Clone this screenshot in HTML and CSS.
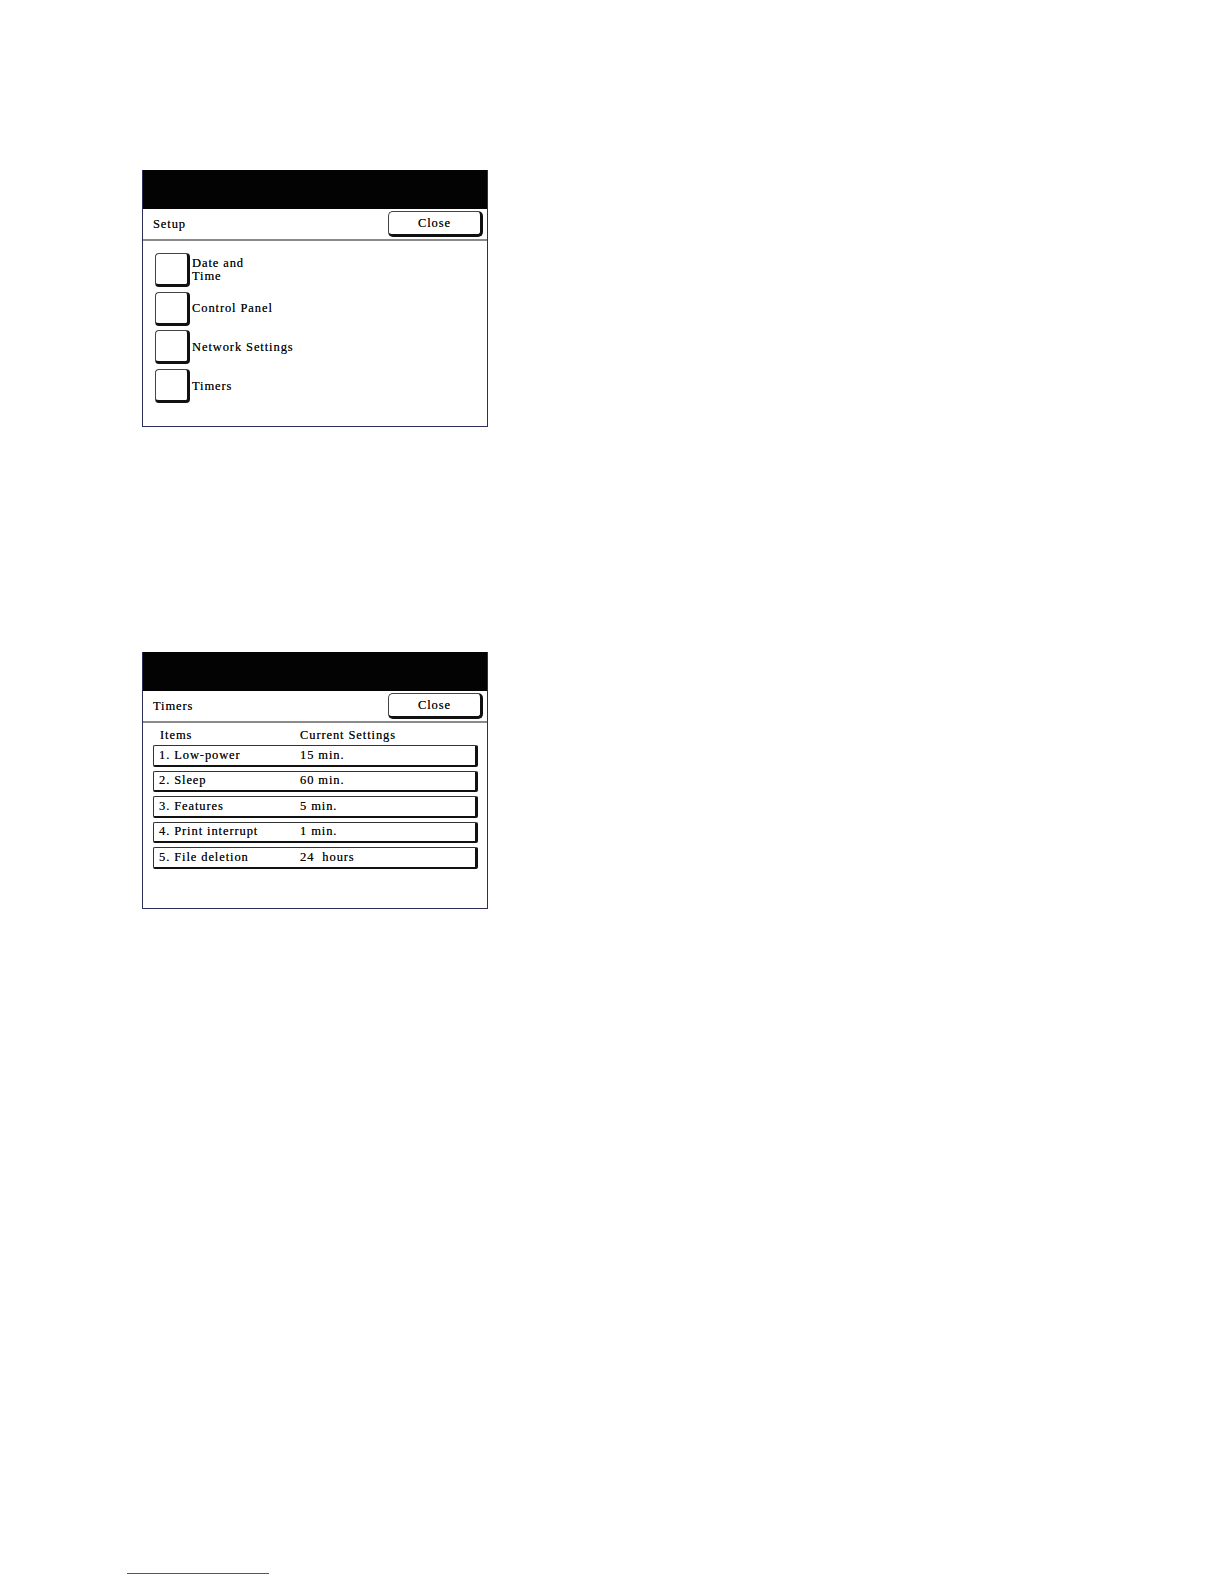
FILE: index.html
```html
<!DOCTYPE html>
<html lang="en">
<head>
<meta charset="utf-8">
<title>Setup and Timers</title>
<link rel="stylesheet" href="styles.css">
</head>
<body>
<div class="page">
  <section class="panel panel-setup">
    <div class="panel-header"></div>
    <div class="title-row">
      <span class="title">Setup</span>
      <span class="close-btn">Close</span>
    </div>
    <div class="menu">
      <div class="menu-item"><span class="square"></span><span class="label">Date and<br>Time</span></div>
      <div class="menu-item"><span class="square"></span><span class="label">Control Panel</span></div>
      <div class="menu-item"><span class="square"></span><span class="label">Network Settings</span></div>
      <div class="menu-item"><span class="square"></span><span class="label">Timers</span></div>
    </div>
  </section>

  <section class="panel panel-timers">
    <div class="panel-header"></div>
    <div class="title-row">
      <span class="title">Timers</span>
      <span class="close-btn">Close</span>
    </div>
    <div class="timer-list">
      <div class="timer-head"><span class="col-item">Items</span><span class="col-value">Current Settings</span></div>
      <div class="timer-row"><span class="col-item">1. Low-power</span><span class="col-value">15 min.</span></div>
      <div class="timer-row"><span class="col-item">2. Sleep</span><span class="col-value">60 min.</span></div>
      <div class="timer-row"><span class="col-item">3. Features</span><span class="col-value">5 min.</span></div>
      <div class="timer-row"><span class="col-item">4. Print interrupt</span><span class="col-value">1 min.</span></div>
      <div class="timer-row"><span class="col-item">5. File deletion</span><span class="col-value">24&nbsp; hours</span></div>
    </div>
  </section>

  <div class="footnote-rule"></div>
</div>
</body>
</html>
```

FILE: styles.css
```css
html, body {
  margin: 0;
  padding: 0;
  background: #ffffff;
}

.page {
  padding-top: 170px;
  font-family: "Liberation Serif", "DejaVu Serif", serif;
  font-size: 12.5px;
  letter-spacing: 0.9px;
  color: #0a0a0a;
  text-shadow: 0 0 0.6px rgba(0, 0, 0, 0.7);
}

.panel {
  box-sizing: border-box;
  width: 346px;
  height: 257px;
  margin-left: 142px;
  border: 1px solid #2c3058;
  border-top: none;
  background: #ffffff;
  display: flex;
  flex-direction: column;
}

.panel-timers {
  margin-top: 225px;
}

.panel-header {
  height: 39px;
  background: #030303;
  flex: none;
}

.title-row {
  flex: none;
  height: 30px;
  display: flex;
  align-items: center;
  justify-content: space-between;
  border-bottom: 2px solid #8a8a8a;
  padding: 0 4px 0 10px;
}

.title {
  line-height: 13px;
  padding-top: 1px;
}

.close-btn {
  box-sizing: border-box;
  width: 95px;
  height: 26px;
  display: flex;
  align-items: center;
  justify-content: center;
  border: 1px solid #444;
  border-right: 3px solid #111;
  border-bottom: 3px solid #111;
  border-radius: 5px;
  background: #fff;
  padding-top: 1px;
}

.menu {
  display: flex;
  flex-direction: column;
  gap: 4.7px;
  padding: 12px 0 0 12px;
}

.menu-item {
  display: flex;
  align-items: center;
  gap: 2px;
}

.square {
  box-sizing: border-box;
  width: 35px;
  height: 34px;
  border: 1px solid #444;
  border-right: 3px solid #111;
  border-bottom: 3px solid #111;
  border-radius: 4px;
  background: #fff;
  flex: none;
}

.label {
  line-height: 13px;
}

.timer-list {
  display: flex;
  flex-direction: column;
  padding: 6px 9px 0 10px;
}

.timer-head {
  display: flex;
  height: 12px;
  line-height: 12px;
  padding-left: 7px;
  margin-bottom: 4px;
}

.timer-head .col-item {
  width: 140px;
}

.timer-row {
  box-sizing: border-box;
  display: flex;
  align-items: center;
  height: 21.5px;
  margin-bottom: 4px;
  padding-left: 5px;
  border: 1px solid #333;
  border-right: 3px solid #111;
  border-bottom: 2px solid #111;
  border-radius: 2px;
  background: #fff;
}

.timer-row .col-item {
  width: 141px;
  flex: none;
}

.footnote-rule {
  width: 142px;
  height: 1px;
  background: #555;
  margin: 664px 0 0 127px;
}
```
